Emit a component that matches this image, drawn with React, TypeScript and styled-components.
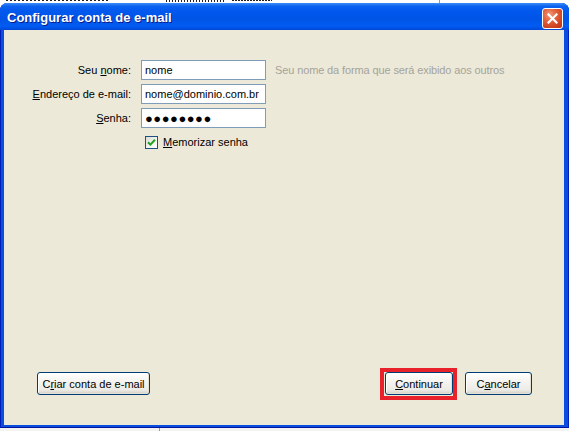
import React from 'react';
import styled, { createGlobalStyle } from 'styled-components';

const GlobalStyle = createGlobalStyle`
  html, body {
    margin: 0;
    padding: 0;
    background: #ffffff;
  }
  body {
    font-family: "Liberation Sans", Arial, sans-serif;
  }
`;

const Screen = styled.div`
  width: 569px;
  height: 431px;
  display: flex;
  flex-direction: column;
  overflow: hidden;
`;

const BehindStrip = styled.div<{ $top?: boolean }>`
  height: 3px;
  flex: none;
  background-repeat: no-repeat;
  background-color: ${(p) => (p.$top ? '#ffffff' : '#f3f3f3')};
  background-image: ${(p) =>
    p.$top
      ? `repeating-linear-gradient(to right, #222 0, #222 2px, transparent 2px, transparent 4px),
         repeating-linear-gradient(to right, #222 0, #222 1px, transparent 1px, transparent 3px),
         repeating-linear-gradient(to right, #222 0, #222 2px, transparent 2px, transparent 3px),
         linear-gradient(#9a9a9a, #9a9a9a)`
      : `linear-gradient(#9a9a9a, #9a9a9a)`};
  background-size: ${(p) =>
    p.$top ? '104px 1px, 60px 2px, 40px 1px, 1px 3px' : '1px 3px'};
  background-position: ${(p) =>
    p.$top ? '6px 0, 166px 0, 232px 0, 439px 0' : '159px 0'};
`;

const Window = styled.div`
  flex: 1;
  display: flex;
  flex-direction: column;
  background: #0a4ee0;
  border-radius: 8px 8px 0 0;
  box-shadow: inset 1px 0 0 #0020b8, inset -1px 0 0 #0020b8, inset 0 -1px 0 #00159c;
`;

const TitleBar = styled.div`
  height: 27px;
  flex: none;
  display: flex;
  align-items: center;
  justify-content: space-between;
  padding: 0 6px 0 7px;
  border-radius: 7px 7px 0 0;
  background: linear-gradient(
    to bottom,
    #3d8cf7 0%,
    #0c63f0 12%,
    #0058ee 30%,
    #0054e6 60%,
    #005cf2 85%,
    #0048d8 100%
  );
`;

const Title = styled.span`
  color: #ffffff;
  font-family: "Liberation Sans", Arial, sans-serif;
  font-weight: bold;
  font-size: 13px;
  text-shadow: 1px 1px 0 #0a1a8c;
  margin-top: 1px;
`;

const CloseButton = styled.div`
  width: 19px;
  height: 19px;
  border: 1px solid #ffffff;
  border-radius: 3px;
  display: flex;
  align-items: center;
  justify-content: center;
  background: radial-gradient(circle at 35% 30%, #f09a7c 0%, #e4643f 35%, #cf4420 70%, #b8331a 100%);
  margin-top: 3px;
`;

const Body = styled.div`
  flex: 1;
  display: flex;
  flex-direction: column;
  justify-content: space-between;
  margin: 0 5px 3px 4px;
  background: #ece9d8;
  padding: 30px 32px 30px 33px;
`;

const Form = styled.div`
  display: grid;
  grid-template-columns: 94px 125px auto;
  grid-auto-rows: 20px;
  column-gap: 10px;
  row-gap: 4px;
  align-items: center;
`;

const Label = styled.label`
  justify-self: end;
  font-size: 11px;
  color: #000000;
  white-space: nowrap;
`;

const Key = styled.span`
  text-decoration: underline;
  text-underline-offset: 1px;
`;

const TextInput = styled.div<{ $secret?: boolean }>`
  height: 20px;
  box-sizing: border-box;
  border: 1px solid #7f9db9;
  background: #ffffff;
  padding: 0 3px;
  display: flex;
  align-items: center;
  font-size: ${(p) => (p.$secret ? '13px' : '11px')};
  letter-spacing: ${(p) => (p.$secret ? '0.5px' : '0')};
  color: #000000;
  white-space: nowrap;
  overflow: hidden;
`;

const Hint = styled.span`
  font-size: 11px;
  color: #a5a39b;
  white-space: nowrap;
  margin-left: -1px;
  letter-spacing: -0.12px;
`;

const CheckRow = styled.div`
  grid-column: 2 / 4;
  display: flex;
  align-items: center;
  gap: 5px;
  padding-left: 4px;
  height: 17px;
  font-size: 11px;
`;

const CheckBox = styled.div`
  width: 13px;
  height: 13px;
  box-sizing: border-box;
  border: 1px solid #1c5180;
  background: linear-gradient(135deg, #dcdcd7 0%, #f4f4f0 60%, #ffffff 100%);
  display: flex;
  align-items: center;
  justify-content: center;
`;

const Footer = styled.div`
  display: flex;
  align-items: center;
  gap: 12px;
`;

const Spacer = styled.div`
  flex: 1;
`;

const Button = styled.div<{ $width: number }>`
  width: ${(p) => p.$width}px;
  height: 23px;
  box-sizing: border-box;
  border: 1px solid #003c74;
  border-radius: 3px;
  background: linear-gradient(to bottom, #ffffff 0%, #f5f4f0 40%, #ecebe6 80%, #d6d0c5 100%);
  box-shadow: inset -1px -1px 0 #e3e0d6, inset 1px 1px 0 #ffffff;
  display: flex;
  align-items: center;
  justify-content: center;
  font-size: 11px;
  color: #000000;
  white-space: nowrap;
`;

const Highlight = styled.div`
  position: relative;
  display: flex;
  &::after {
    content: '';
    position: absolute;
    top: -4px;
    bottom: -5px;
    left: -5px;
    right: -4px;
    border: 4px solid #e8212b;
    box-sizing: border-box;
    pointer-events: none;
  }
`;

const CheckMark = () => (
  <svg width="9" height="9" viewBox="0 0 9 9">
    <path d="M1 4.2 L3.4 6.6 L8 1.8" fill="none" stroke="#21a121" strokeWidth="2" />
  </svg>
);

const CloseIcon = () => (
  <svg width="11" height="11" viewBox="0 0 11 11">
    <path d="M1.5 1.5 L9.5 9.5 M9.5 1.5 L1.5 9.5" stroke="#ffffff" strokeWidth="2.2" strokeLinecap="square" />
  </svg>
);

const App = () => {
  return (
    <>
      <GlobalStyle />
      <Screen>
        <BehindStrip $top />
        <Window>
          <TitleBar>
            <Title>Configurar conta de e-mail</Title>
            <CloseButton>
              <CloseIcon />
            </CloseButton>
          </TitleBar>
          <Body>
            <Form>
              <Label>
                Seu <Key>n</Key>ome:
              </Label>
              <TextInput>nome</TextInput>
              <Hint>Seu nome da forma que será exibido aos outros</Hint>

              <Label>
                <Key>E</Key>ndereço de e-mail:
              </Label>
              <TextInput>nome@dominio.com.br</TextInput>
              <span />

              <Label>
                <Key>S</Key>enha:
              </Label>
              <TextInput $secret>●●●●●●●●</TextInput>
              <span />

              <span />
              <CheckRow>
                <CheckBox>
                  <CheckMark />
                </CheckBox>
                <span>
                  <Key>M</Key>emorizar senha
                </span>
              </CheckRow>
            </Form>

            <Footer>
              <Button $width={113}>
                C<Key>r</Key>iar conta de e-mail
              </Button>
              <Spacer />
              <Highlight>
                <Button $width={68}>
                  <Key>C</Key>ontinuar
                </Button>
              </Highlight>
              <Button $width={67}>
                C<Key>a</Key>ncelar
              </Button>
            </Footer>
          </Body>
        </Window>
        <BehindStrip />
      </Screen>
    </>
  );
};

export default App;
